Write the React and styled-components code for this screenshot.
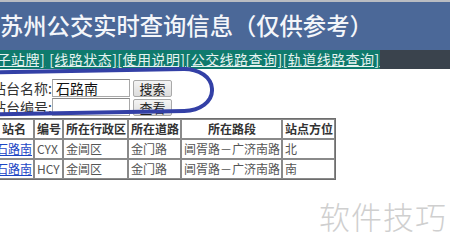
import React from "react";
import styled, { createGlobalStyle } from "styled-components";

const GlobalStyle = createGlobalStyle`
  html, body { margin: 0; padding: 0; background: #fff; }
  body { font-family: "Noto Sans CJK SC", "Noto Sans", sans-serif; }
`;

const Page = styled.div`
  position: relative;
  width: 450px;
  height: 250px;
  overflow: hidden;
  background: #fff;
`;

const TopLine = styled.div`
  height: 2px;
  background: #b9bcc2;
`;

const Header = styled.h1`
  margin: 0;
  height: 48px;
  background: #4b6898;
  color: #f4f6fa;
  font-size: 23.3px;
  font-weight: 500;
  line-height: 47px;
  padding-left: 0;
  white-space: nowrap;
`;

const NavBar = styled.div`
  display: flex;
  height: 19px;
  background: #3a434d;
`;

const NavLinks = styled.div`
  margin-left: -23px;
  background: #0f7a6d;
  font-size: 14px;
  line-height: 19px;
  white-space: nowrap;
  letter-spacing: 0.45px;
`;

const NavLink = styled.a`
  color: #e6f3f1;
  text-decoration: underline;
  margin-right: ${(p) => (p.$spaced ? "4px" : "0")};
`;

const Form = styled.div`
  display: flex;
  flex-direction: column;
  gap: 1px;
  padding-top: 10px;
  margin-left: -8px;
`;

const FormRow = styled.div`
  display: flex;
  align-items: center;
  height: 18px;
`;

const Label = styled.span`
  width: 60px;
  font-size: 14px;
  color: #333;
  white-space: nowrap;
`;

const Input = styled.div`
  box-sizing: border-box;
  width: 78px;
  height: 18px;
  border: 1px solid #a8a8a8;
  border-top-color: #8a8a8a;
  background: #fff;
  font-size: 14px;
  line-height: 16px;
  padding-left: 3px;
  color: #111;
`;

const Button = styled.div`
  box-sizing: border-box;
  margin-left: 3px;
  width: 39px;
  height: 17px;
  border: 1px solid #a9a9a9;
  border-radius: 2px;
  background: linear-gradient(#f4f4f4, #dcdcdc);
  font-size: 13px;
  line-height: 15px;
  text-align: center;
  color: #222;
`;

const Table = styled.table`
  margin-top: 2px;
  margin-left: -8px;
  border-collapse: separate;
  border-spacing: 0;
  border: 1px solid #6e6e6e;
  font-size: 12px;
`;

const Th = styled.th`
  border: 1px solid #8a8a8a;
  padding: 1px 1px 1px 2px;
  line-height: 16px;
  font-weight: bold;
  color: #333;
  white-space: nowrap;
  text-align: center;
`;

const Td = styled.td`
  border: 1px solid #8a8a8a;
  padding: 1px 1px 1px 2px;
  line-height: 16px;
  color: #555;
  white-space: nowrap;
  text-align: left;
`;

const StationLink = styled.a`
  color: #1b46c4;
  text-decoration: underline;
`;

const Annotation = styled.div`
  position: absolute;
  left: -70px;
  top: 69px;
  width: 276px;
  height: 38px;
  border: 4px solid #3340a6;
  border-radius: 30px / 22px;
  transform: rotate(-1deg);
  pointer-events: none;
`;

const Watermark = styled.div`
  position: absolute;
  left: 319px;
  top: 193px;
  font-size: 31px;
  font-weight: 300;
  color: #cfcfcf;
  letter-spacing: 1px;
  white-space: nowrap;
`;

const navItems = ["[电子站牌]", "[线路状态]", "[使用说明]", "[公交线路查询]", "[轨道线路查询]"];

const rows = [
  { name: "石路南", code: "CYX", district: "金阊区", road: "金门路", section: "阊胥路－广济南路", dir: "北" },
  { name: "石路南", code: "HCY", district: "金阊区", road: "金门路", section: "阊胥路－广济南路", dir: "南" },
];

export default function App() {
  return (
    <>
      <GlobalStyle />
      <Page>
        <TopLine />
        <Header>苏州公交实时查询信息（仅供参考）</Header>
        <NavBar>
          <NavLinks>
            {navItems.map((t, i) => (
              <NavLink key={t} href="#" $spaced={i === 0}>
                {t}
              </NavLink>
            ))}
          </NavLinks>
        </NavBar>
        <Form>
          <FormRow>
            <Label>站台名称:</Label>
            <Input>石路南</Input>
            <Button>搜索</Button>
          </FormRow>
          <FormRow>
            <Label>站台编号:</Label>
            <Input />
            <Button>查看</Button>
          </FormRow>
        </Form>
        <Table>
          <thead>
            <tr>
              <Th>站名</Th>
              <Th>编号</Th>
              <Th>所在行政区</Th>
              <Th>所在道路</Th>
              <Th>所在路段</Th>
              <Th>站点方位</Th>
            </tr>
          </thead>
          <tbody>
            {rows.map((r) => (
              <tr key={r.code}>
                <Td>
                  <StationLink href="#">{r.name}</StationLink>
                </Td>
                <Td>{r.code}</Td>
                <Td>{r.district}</Td>
                <Td>{r.road}</Td>
                <Td>{r.section}</Td>
                <Td>{r.dir}</Td>
              </tr>
            ))}
          </tbody>
        </Table>
        <Annotation />
        <Watermark>软件技巧</Watermark>
      </Page>
    </>
  );
}
